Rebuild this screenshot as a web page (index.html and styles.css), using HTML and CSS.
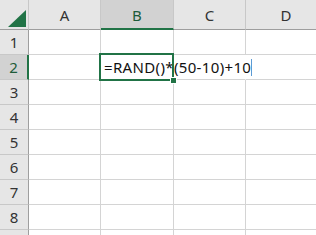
FILE: index.html
```html
<!DOCTYPE html>
<html>
<head>
<meta charset="utf-8">
<link rel="stylesheet" href="styles.css">
</head>
<body>
<div class="sheet">
  <div class="grid">
    <div class="hdr corner"><span class="tri"></span></div>
    <div class="hdr col">A</div>
    <div class="hdr col sel-col">B</div>
    <div class="hdr col">C</div>
    <div class="hdr col last">D</div>

    <div class="hdr rowh">1</div><div class="cell"></div><div class="cell"></div><div class="cell"></div><div class="cell last"></div>
    <div class="hdr rowh sel-row">2</div><div class="cell"></div><div class="cell active"><span class="formula">=RAND()*(50-10)+10<span class="caret"></span></span></div><div class="cell noright"></div><div class="cell last"></div>
    <div class="hdr rowh">3</div><div class="cell"></div><div class="cell"></div><div class="cell"></div><div class="cell last"></div>
    <div class="hdr rowh">4</div><div class="cell"></div><div class="cell"></div><div class="cell"></div><div class="cell last"></div>
    <div class="hdr rowh">5</div><div class="cell"></div><div class="cell"></div><div class="cell"></div><div class="cell last"></div>
    <div class="hdr rowh">6</div><div class="cell"></div><div class="cell"></div><div class="cell"></div><div class="cell last"></div>
    <div class="hdr rowh">7</div><div class="cell"></div><div class="cell"></div><div class="cell"></div><div class="cell last"></div>
    <div class="hdr rowh">8</div><div class="cell"></div><div class="cell"></div><div class="cell"></div><div class="cell last"></div>
    <div class="hdr rowh"></div><div class="cell"></div><div class="cell"></div><div class="cell"></div><div class="cell last"></div>
  </div>
  <div class="selection"><span class="handle"></span></div>
</div>
</body>
</html>
```
FILE: styles.css
```css
html, body {
  margin: 0;
  padding: 0;
  background: #fff;
  overflow: hidden;
}
.sheet {
  position: relative;
  width: 316px;
  height: 235px;
  overflow: hidden;
  font-family: "Noto Sans", "Liberation Sans", sans-serif;
  color: #222;
}
.grid {
  display: grid;
  grid-template-columns: 29px 72px 73px 72px 80px;
  grid-template-rows: 30px repeat(9, 25px);
}
.hdr {
  box-sizing: border-box;
  background: #e6e6e6;
  display: flex;
  align-items: center;
  justify-content: center;
  font-size: 15px;
  color: #333;
}
.corner {
  border-right: 1px solid #c8c8c8;
  border-bottom: 1px solid #9e9e9e;
  position: relative;
}
.tri {
  position: absolute;
  left: 8px;
  top: 10px;
  width: 0;
  height: 0;
  border-left: 18px solid transparent;
  border-bottom: 17px solid #217346;
}
.col {
  border-right: 1px solid #c8c8c8;
  border-bottom: 1px solid #9e9e9e;
  padding-top: 1px;
}
.col.last { border-right: none; }
.sel-col {
  background: #d2d2d2;
  border-bottom: 2px solid #217346;
  color: #1e5c3a;
}
.rowh {
  border-right: 1px solid #9e9e9e;
  border-bottom: 1px solid #c8c8c8;
}
.sel-row {
  background: #d2d2d2;
  border-right: 2px solid #217346;
  color: #1e5c3a;
}
.cell {
  box-sizing: border-box;
  border-right: 1px solid #d4d4d4;
  border-bottom: 1px solid #d4d4d4;
  position: relative;
}
.cell.last { border-right: none; }
.cell.noright { border-right-color: transparent; }
.cell.active {
  border-right-color: transparent;
  overflow: visible;
  z-index: 2;
}
.formula {
  position: absolute;
  left: 3px;
  top: 2px;
  white-space: nowrap;
  font-size: 15px;
  line-height: 20px;
  color: #111;
  letter-spacing: 0.35px;
}
.caret {
  display: inline-block;
  width: 1px;
  height: 17px;
  background: #5b9bd5;
  vertical-align: -3px;
  margin-left: 0;
}
.selection {
  position: absolute;
  left: 99px;
  top: 53px;
  width: 71px;
  height: 24px;
  border: 2px solid #217346;
  z-index: 3;
  pointer-events: none;
}
.handle {
  position: absolute;
  right: -5px;
  bottom: -5px;
  width: 5px;
  height: 5px;
  background: #217346;
  border: 1px solid #fff;
}
```
